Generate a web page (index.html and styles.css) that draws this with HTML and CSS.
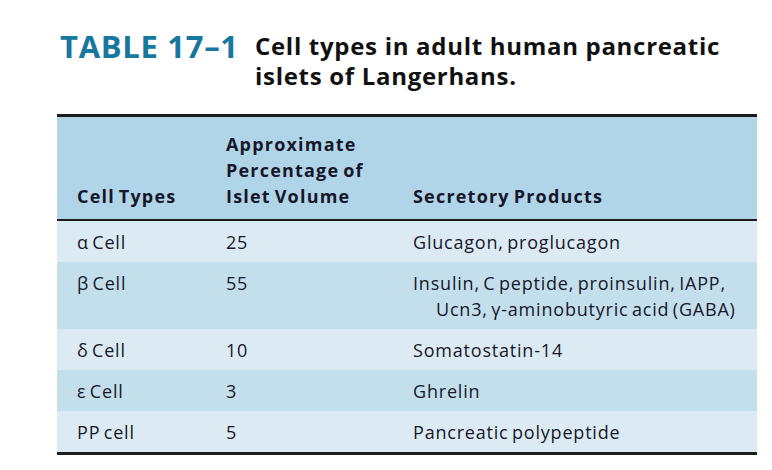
FILE: index.html
```html
<!DOCTYPE html>
<html lang="en">
<head>
<meta charset="utf-8">
<title>Table 17-1</title>
<link rel="stylesheet" href="styles.css">
</head>
<body>
<div class="page">
  <div class="caption">
    <div class="label">TABLE 17–1</div>
    <div class="title">Cell types in adult human pancreatic<br>islets of Langerhans.</div>
  </div>
  <table class="data">
    <thead>
      <tr>
        <th class="c1">Cell Types</th>
        <th class="c2">Approximate<br>Percentage of<br>Islet Volume</th>
        <th class="c3">Secretory Products</th>
      </tr>
    </thead>
    <tbody>
      <tr class="light"><td>α Cell</td><td>25</td><td>Glucagon, proglucagon</td></tr>
      <tr class="dark"><td>β Cell</td><td>55</td><td class="hang">Insulin, C peptide, proinsulin, IAPP,<br>Ucn3, γ-aminobutyric acid (GABA)</td></tr>
      <tr class="light"><td>δ Cell</td><td>10</td><td>Somatostatin-14</td></tr>
      <tr class="dark"><td>ε Cell</td><td>3</td><td>Ghrelin</td></tr>
      <tr class="light"><td>PP cell</td><td>5</td><td>Pancreatic polypeptide</td></tr>
    </tbody>
  </table>
</div>
</body>
</html>
```
FILE: styles.css
```css
html, body {
  margin: 0;
  padding: 0;
  background: #ffffff;
}
.page {
  padding: 27px 0 0 57px;
  width: 700px;
  font-family: "Open Sans", "Liberation Sans", sans-serif;
}
.caption {
  display: flex;
  align-items: flex-start;
  height: 87px;
}
.label {
  width: 198px;
  padding-left: 3px;
  box-sizing: border-box;
  color: #16779f;
  font-weight: 700;
  font-size: 31px;
  line-height: 38px;
  letter-spacing: 0.7px;
}
.title {
  color: #111111;
  font-weight: 700;
  font-size: 24px;
  line-height: 30px;
  padding-top: 4px;
  letter-spacing: 0.7px;
}
.data {
  width: 700px;
  border-collapse: collapse;
  border-top: 3px solid #1c1c1c;
  border-bottom: 3px solid #1c1c1c;
  color: #17172a;
  font-size: 18px;
  font-weight: 500;
}
.data thead tr {
  background: #b0d5e8;
  border-bottom: 2px solid #1c1c1c;
}
.data th {
  text-align: left;
  vertical-align: bottom;
  font-weight: 700;
  line-height: 26px;
  letter-spacing: 1.2px;
  word-spacing: -2px;
  padding: 0 0 10px 0;
  height: 92px;
}
.data th.c1, .data td:first-child {
  width: 149px;
  padding-left: 20px;
}
.data th.c2, .data td:nth-child(2) {
  width: 187px;
}
.data td {
  vertical-align: top;
  line-height: 26px;
  letter-spacing: 0.8px;
  word-spacing: -2px;
  padding: 8px 0 7px 0;
}
.data tr.light { background: #dcebf3; }
.data tr.dark { background: #c3dfec; }
.data td.hang {
  padding-left: 23px;
  text-indent: -23px;
}
```
